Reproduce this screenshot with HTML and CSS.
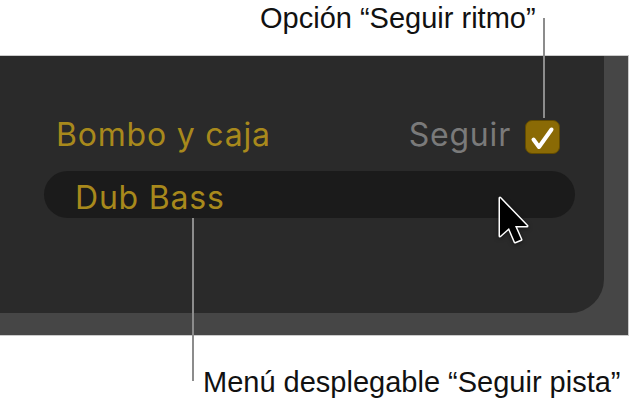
FILE: index.html
```html
<!DOCTYPE html>
<html lang="es">
<head>
    <meta charset="UTF-8">
    <meta name="viewport" content="width=device-width, initial-scale=1.0">
    <title>Seguir ritmo</title>
    <link rel="stylesheet" href="styles.css">
</head>
<body>
    <div class="figure">
        <p class="callout callout-top">Opción “Seguir ritmo”</p>
        <div class="screen">
            <div class="panel">
                <div class="track-row">
                    <span class="track-name">Bombo y caja</span>
                    <label class="follow">
                        <span class="follow-label">Seguir</span>
                        <span class="checkbox">
                            <svg width="35" height="34" viewBox="0 0 35 34">
                                <path d="M8.5 19.5 L14 27 L26.5 9.5" fill="none" stroke="#fff" stroke-width="4" stroke-linecap="round" stroke-linejoin="round"/>
                            </svg>
                        </span>
                    </label>
                </div>
                <div class="track-menu">Dub Bass</div>
            </div>
        </div>
        <p class="callout callout-bottom">Menú desplegable “Seguir pista”</p>

        <!-- leader lines and pointer sit over the screenshot -->
        <span class="leader leader-top"></span>
        <span class="leader leader-bottom"></span>
        <svg class="cursor" width="36" height="52" viewBox="0 0 36 52">
            <path d="M3 2 L3 40 L12 32 L18 46 L24 43.5 L18 30 L30 30 Z" fill="#000" stroke="#fff" stroke-width="3" stroke-linejoin="round" paint-order="stroke"/>
        </svg>
    </div>
</body>
</html>
```

FILE: styles.css
```css
body {
    margin: 0;
    background-color: #fff;
    font-family: "Liberation Sans", Arial, sans-serif;
}
.figure {
    position: relative;
    width: 630px;
    height: 404px;
    overflow: hidden;
}
.callout {
    margin: 0;
    font-size: 29px;
    line-height: 34px;
    color: #111;
    white-space: nowrap;
}
.callout-top {
    height: 55px;
    box-sizing: border-box;
    padding-top: 1px;
    padding-left: 260px;
}
.callout-bottom {
    margin-top: 29px;
    padding-left: 203px;
}
.screen {
    width: 629px;
    box-sizing: border-box;
    border-top: 1px solid #cbcbcb;
    border-bottom: 1px solid #cbcbcb;
    border-right: 1px solid #cbcbcb;
    background-color: #464646;
    padding-bottom: 22px;
}
.panel {
    width: 604px;
    height: 257px;
    box-sizing: border-box;
    padding-top: 61px;
    background-color: #2a2a2a;
    border-bottom-right-radius: 34px;
}
.track-row {
    display: flex;
    justify-content: space-between;
    align-items: flex-start;
    padding: 0 44px 0 56px;
    font-family: Inter, "Liberation Sans", sans-serif;
    font-size: 32px;
    line-height: 36px;
    letter-spacing: 0.8px;
}
.track-name {
    color: #a8891c;
}
.follow {
    display: flex;
    align-items: flex-start;
    gap: 14px;
}
.follow-label {
    color: #7a7a7a;
}
.checkbox {
    display: block;
    width: 35px;
    height: 34px;
    margin-top: 3px;
    box-sizing: border-box;
    border: 1px solid #614a00;
    border-radius: 7px;
    background-color: #8a6a05;
}
.checkbox svg {
    display: block;
    margin: -1px;
}
.track-menu {
    height: 47px;
    box-sizing: border-box;
    margin: 17px 29px 0 44px;
    padding: 7px 0 0 31px;
    border-radius: 24px;
    background-color: #1b1b1b;
    color: #a8891c;
    font-family: Inter, "Liberation Sans", sans-serif;
    font-size: 32px;
    line-height: 40px;
    letter-spacing: 0.8px;
}
.leader {
    position: absolute;
    width: 2px;
    background-color: #8c8c8c;
}
.leader-top {
    left: 543px;
    top: 18px;
    height: 100px;
}
.leader-bottom {
    left: 192px;
    top: 218px;
    height: 163px;
}
.cursor {
    position: absolute;
    left: 497px;
    top: 196px;
    filter: drop-shadow(0 1px 2px rgba(0, 0, 0, 0.5));
}
```
